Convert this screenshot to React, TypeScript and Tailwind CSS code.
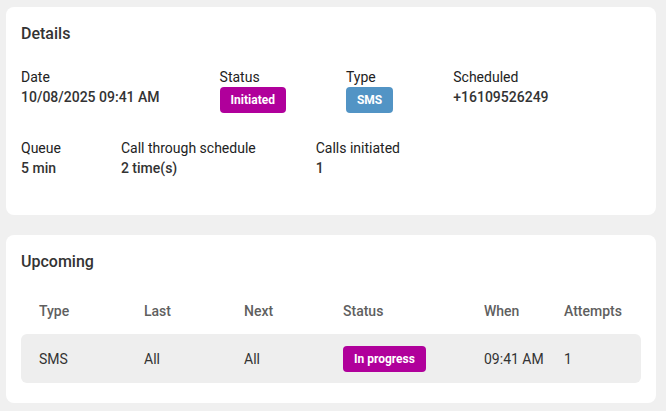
import React from 'react';

const font = { fontFamily: 'Roboto, "Noto Sans", sans-serif' };

export default function App() {
  return (
    <div className="w-[666px] h-[411px] bg-[#f0f0f0] pl-[6px] pr-[10px] pt-[7px] text-[#222]" style={font}>
      {/* Details */}
      <section className="h-[208px] rounded-lg bg-white px-[15px] pt-[17px]">
        <h2 className="text-base font-medium leading-5 text-[#333] mb-[23px]">Details</h2>

        <div className="flex gap-[60px]">
          <Field label="Date" value="10/08/2025 09:41 AM" />
          <div>
            <div className="text-sm leading-5">Status</div>
            <Badge color="bg-[#b0009b]">Initiated</Badge>
          </div>
          <div>
            <div className="text-sm leading-5">Type</div>
            <Badge color="bg-[#5294c5]">SMS</Badge>
          </div>
          <Field label="Scheduled" value="+16109526249" />
        </div>

        <div className="flex gap-[60px] mt-[25px]">
          <Field label="Queue" value="5 min" />
          <Field label="Call through schedule" value="2 time(s)" />
          <Field label="Calls initiated" value="1" />
        </div>
      </section>

      {/* Upcoming */}
      <section className="mt-5 h-[168px] rounded-lg bg-white px-[15px] pt-[17px]">
        <h2 className="text-base font-medium leading-5 text-[#333]">Upcoming</h2>

        <div className="mt-[17px] grid grid-cols-[105px_100px_99px_141px_80px_1fr] h-[44px] items-center pl-[18px] text-sm font-medium text-[#5f5f5f]">
          <span>Type</span>
          <span>Last</span>
          <span>Next</span>
          <span>Status</span>
          <span>When</span>
          <span>Attempts</span>
        </div>

        <div className="mt-px grid grid-cols-[105px_100px_99px_141px_80px_1fr] h-[49px] items-center rounded-md bg-[#eeeeee] pl-[18px] text-sm text-[#333]">
          <span>SMS</span>
          <span>All</span>
          <span>All</span>
          <span>
            <span className="inline-flex h-[26px] items-center rounded bg-[#b0009b] px-[11px] text-xs font-bold text-white">
              In progress
            </span>
          </span>
          <span>09:41 AM</span>
          <span>1</span>
        </div>
      </section>
    </div>
  );
}

function Field({ label, value }: { label: string; value: string }) {
  return (
    <div>
      <div className="text-sm leading-5">{label}</div>
      <div className="text-sm leading-5 font-medium text-[#333]">{value}</div>
    </div>
  );
}

function Badge({ color, children }: { color: string; children: React.ReactNode }) {
  return (
    <div className={`inline-flex h-[26px] items-center rounded ${color} px-[11px] text-xs font-bold text-white`}>
      {children}
    </div>
  );
}
